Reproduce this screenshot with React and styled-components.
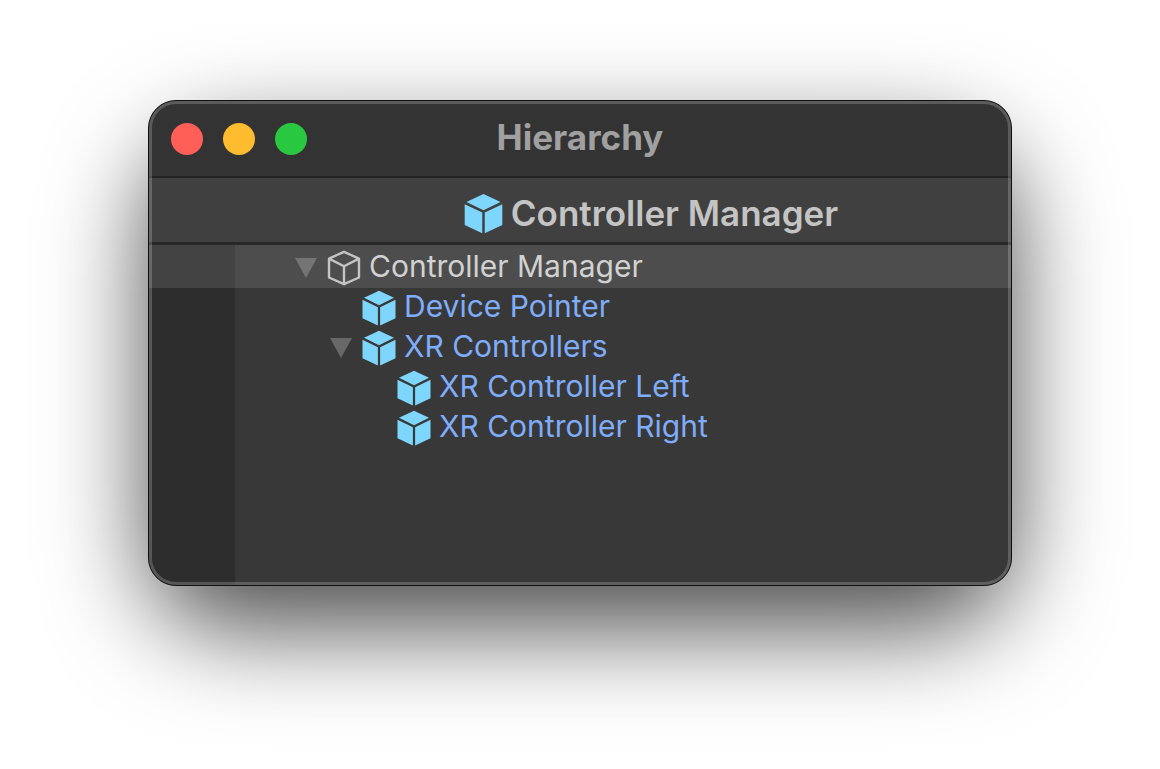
import React, { useState } from "react";
import styled, { createGlobalStyle } from "styled-components";

const GlobalStyle = createGlobalStyle`
  * { box-sizing: border-box; }
  body {
    margin: 0;
    background: #fff;
    font-family: Inter, "Liberation Sans", sans-serif;
  }
`;

const Desktop = styled.main`
  padding: 100px 148px 183px;
  overflow: hidden;
`;

const Window = styled.section`
  position: relative;
  display: flex;
  flex-direction: column;
  border: 1px solid #101010;
  border-radius: 28px;
  background: #383838;
  overflow: hidden;

  &::after {
    content: "";
    position: absolute;
    inset: 0;
    border: 3px solid rgba(255, 255, 255, 0.2);
    border-radius: 27px;
    pointer-events: none;
  }
`;

const Shadow = styled.div`
  border-radius: 80px;
  box-shadow: 0 42px 100px rgba(0, 0, 0, 0.7);
`;

const TitleBar = styled.header`
  display: grid;
  grid-template-columns: 1fr auto 1fr;
  align-items: center;
  height: 77px;
  padding: 0 22px;
  background: #333;
  border-bottom: 2px solid #232323;
`;

const Lights = styled.div`
  display: flex;
  gap: 20px;
`;

const Light = styled.button`
  width: 32px;
  height: 32px;
  padding: 0;
  border: 0;
  border-radius: 50%;
  background: ${(p) => p.$color};
`;

const Title = styled.h1`
  margin: 0;
  padding-bottom: 4px;
  color: #a0a0a0;
  font-size: 35px;
  line-height: 40px;
  font-weight: 700;
`;

const PrefabBar = styled.div`
  display: flex;
  align-items: center;
  justify-content: center;
  gap: 8px;
  height: 67px;
  padding: 6px 0 0 142px;
  background: #404040;
  border-bottom: 3px solid #282828;
`;

const PrefabName = styled.h2`
  margin: 0;
  color: #c4c4c4;
  font-size: 35px;
  line-height: 40px;
  font-weight: 600;
`;

const Tree = styled.ul`
  margin: 0;
  padding: 0 0 137px;
  list-style: none;
  background: linear-gradient(to right, #2d2d2d 86px, #383838 86px);
`;

const Row = styled.li`
  display: flex;
  align-items: center;
  gap: 8px;
  height: ${(p) => (p.$root ? 43 : 40)}px;
  padding-top: ${(p) => (p.$root ? 3 : 0)}px;
  padding-left: ${(p) => 146 + p.$depth * 35}px;
  background: ${(p) =>
    p.$root ? "linear-gradient(to right, #434343 86px, #4d4d4d 86px)" : "none"};
  color: ${(p) => (p.$root ? "#d2d2d2" : "#7fadfa")};
  font-size: 30px;
  line-height: 36px;
`;

const CaretSlot = styled.span`
  display: flex;
  width: 24px;
`;

const Caret = styled.button`
  display: flex;
  padding: 0;
  border: 0;
  background: none;
  color: ${(p) => (p.$root ? "#747474" : "#686868")};
  transform: ${(p) => (p.$open ? "none" : "rotate(-90deg)")};
`;

const Label = styled.span`
  padding-bottom: 4px;
  white-space: nowrap;
`;

const CubeSvg = styled.svg`
  flex: none;
  width: ${(p) => p.$size}px;
  height: ${(p) => p.$size + 2}px;
`;

function Cube({ size = 34, outline = false }) {
  return (
    <CubeSvg $size={size} viewBox="0 0 34 36" aria-hidden="true">
      {outline ? (
        <path
          d="M17 1.8 32 8.6V27.5L17 34.2 2 27.5V8.6ZM2 8.6 17 16.2 32 8.6M17 16.2V34.2"
          fill="none"
          stroke="#c4c4c4"
          strokeWidth="2.4"
          strokeLinejoin="round"
        />
      ) : (
        <g fill="#7fd6fd">
          <path d="M17 .8 32 7.8 17 15.2 2 7.8Z" />
          <path d="M.5 9.8 15.9 17.2V35.4L.5 28.2Z" />
          <path d="M33.5 9.8 18.1 17.2V35.4L33.5 28.2Z" />
        </g>
      )}
    </CubeSvg>
  );
}

const items = [
  { name: "Controller Manager", depth: 0, parent: true },
  { name: "Device Pointer", depth: 1 },
  { name: "XR Controllers", depth: 1, parent: true },
  { name: "XR Controller Left", depth: 2 },
  { name: "XR Controller Right", depth: 2 },
];

const lights = [
  ["Close", "#ff5f57"],
  ["Minimize", "#febc2e"],
  ["Zoom", "#28c840"],
];

export default function App() {
  const [closed, setClosed] = useState({});
  const toggle = (name) => setClosed((c) => ({ ...c, [name]: !c[name] }));
  const visible = items.filter(
    (item) =>
      !(item.depth > 0 && closed["Controller Manager"]) &&
      !(item.depth > 1 && closed["XR Controllers"])
  );

  return (
    <>
      <GlobalStyle />
      <Desktop>
        <Shadow>
          <Window>
            <TitleBar>
              <Lights>
                {lights.map(([label, color]) => (
                  <Light key={label} aria-label={label} $color={color} />
                ))}
              </Lights>
              <Title>Hierarchy</Title>
            </TitleBar>
            <PrefabBar>
              <Cube size={39} />
              <PrefabName>Controller Manager</PrefabName>
            </PrefabBar>
            <Tree>
              {visible.map(({ name, depth, parent }) => (
                <Row key={name} $depth={depth} $root={depth === 0}>
                  <CaretSlot>
                    {parent && (
                      <Caret
                        aria-label={`Toggle ${name}`}
                        aria-expanded={!closed[name]}
                        $open={!closed[name]}
                        $root={depth === 0}
                        onClick={() => toggle(name)}
                      >
                        <svg width="22" height="20" viewBox="0 0 22 20">
                          <path d="M0 0H22L11 20Z" fill="currentColor" />
                        </svg>
                      </Caret>
                    )}
                  </CaretSlot>
                  <Cube outline={depth === 0} />
                  <Label>{name}</Label>
                </Row>
              ))}
            </Tree>
          </Window>
        </Shadow>
      </Desktop>
    </>
  );
}
